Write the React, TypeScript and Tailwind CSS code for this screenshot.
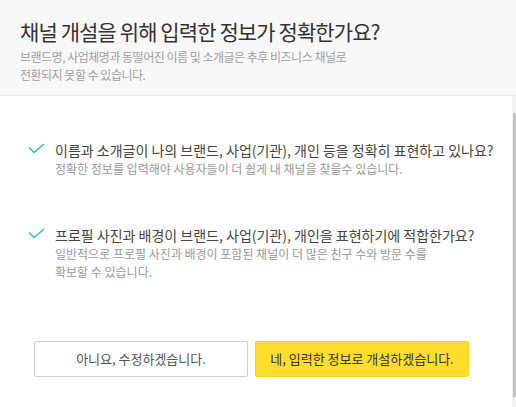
import React from "react";

const font = { fontFamily: '"Noto Sans CJK KR", "Noto Sans", sans-serif' };

function Check() {
  return (
    <svg width="17" height="11" viewBox="0 0 17 11" className="shrink-0">
      <path d="M1 4.5 L6 9.5 L16 1" fill="none" stroke="#2ec5b6" strokeWidth="1.6" />
    </svg>
  );
}

export default function App() {
  return (
    <div className="w-[516px] h-[407px] flex flex-col bg-white overflow-hidden" style={font}>
      <div className="h-[96px] shrink-0 bg-[#f8f8f8] border-b border-[#ebebeb] pl-[20px] pt-[16px]">
        <h1 className="text-[21px] leading-[30px] text-[#333] tracking-[-0.9px]">
          채널 개설을 위해 입력한 정보가 정확한가요?
        </h1>
        <p className="mt-[2px] text-[12px] leading-[18px] text-[#a0a0a0] tracking-[-0.5px]">
          브랜드명, 사업체명과 동떨어진 이름 및 소개글은 추후 비즈니스 채널로
          <br />
          전환되지 못할 수 있습니다.
        </p>
      </div>
      <div className="flex flex-1 min-h-0">
        <div className="flex-1 flex flex-col">
          <div className="flex pl-[28px] pt-[44px]">
            <div className="pt-[3px]">
              <Check />
            </div>
            <div className="ml-[10px]">
              <p className="text-[14px] leading-[20px] text-[#444]">
                이름과 소개글이 나의 브랜드, 사업(기관), 개인 등을 정확히 표현하고 있나요?
              </p>
              <p className="text-[12px] leading-[18px] text-[#999]">
                정확한 정보를 입력해야 사용자들이 더 쉽게 내 채널을 찾을수 있습니다.
              </p>
            </div>
          </div>
          <div className="flex pl-[28px] pt-[47px]">
            <div className="pt-[3px]">
              <Check />
            </div>
            <div className="ml-[10px]">
              <p className="text-[14px] leading-[20px] text-[#444]">
                프로필 사진과 배경이 브랜드, 사업(기관), 개인을 표현하기에 적합한가요?
              </p>
              <p className="text-[12px] leading-[18px] text-[#999]">
                일반적으로 프로필 사진과 배경이 포함된 채널이 더 많은 친구 수와 방문 수를
                <br />
                확보할 수 있습니다.
              </p>
            </div>
          </div>
          <div className="flex gap-[7px] pl-[34px] mt-[60px]">
            <button className="w-[214px] h-[36px] border border-[#d0d0d0] bg-white rounded-[2px] text-[13px] text-[#555]">
              아니요, 수정하겠습니다.
            </button>
            <button className="w-[214px] h-[36px] bg-[#fedd2c] border border-[#f5d420] rounded-[2px] text-[13px] text-[#333]">
              네, 입력한 정보로 개설하겠습니다.
            </button>
          </div>
        </div>
        <div className="w-[4px] bg-[#f1f1f1] pt-[17px] pb-[10px] flex justify-end">
          <div className="w-[3px] h-full bg-[#c1c1c1]" />
        </div>
      </div>
    </div>
  );
}
